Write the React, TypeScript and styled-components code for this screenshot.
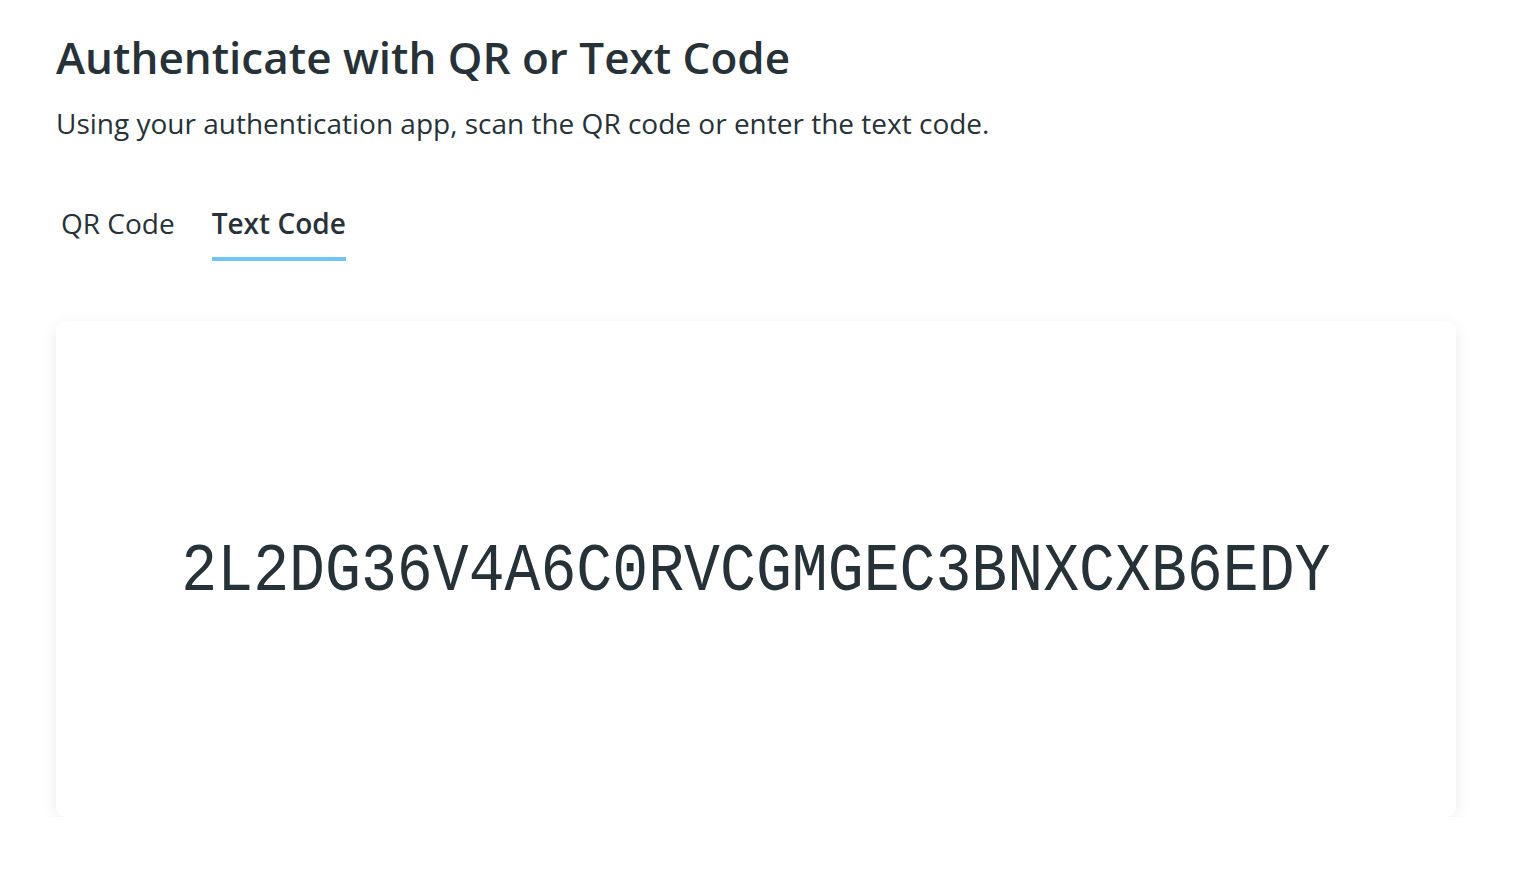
import styled, { createGlobalStyle } from 'styled-components'

const GlobalStyle = createGlobalStyle`
  body {
    margin: 0;
    background: #ffffff;
    font-family: "Open Sans", "Noto Sans", sans-serif;
    color: #263238;
  }
`

const Page = styled.div`
  padding: 28px 58px 0 56px;
`

const Title = styled.h1`
  margin: 0;
  font-size: 44px;
  font-weight: 600;
  line-height: 58px;
  color: #263238;
`

const Subtitle = styled.p`
  margin: 18px 0 0;
  font-size: 28px;
  line-height: 38px;
  color: #263238;
`

const Tabs = styled.div`
  display: flex;
  gap: 37px;
  margin-top: 62px;
  padding-left: 5px;
`

const Tab = styled.button<{ $active?: boolean }>`
  border: 0;
  background: none;
  padding: 0 0 15px;
  font-family: inherit;
  font-size: 28px;
  line-height: 38px;
  font-weight: ${(p) => (p.$active ? 600 : 400)};
  color: #263238;
  border-bottom: 4px solid ${(p) => (p.$active ? '#6ec4f4' : 'transparent')};
  cursor: pointer;
`

const Card = styled.div`
  margin-top: 60px;
  height: 496px;
  border-radius: 9px;
  background: #ffffff;
  box-shadow: 0 3px 16px rgba(0, 0, 0, 0.08);
  display: flex;
  align-items: center;
  justify-content: center;
`

const Code = styled.div`
  font-family: "Liberation Mono", "DejaVu Sans Mono", monospace;
  font-size: 68px;
  line-height: 80px;
  color: #263238;
  transform: scaleX(0.88);
  white-space: nowrap;
  padding-top: 6px;
`

const App = () => {
  return (
    <Page>
      <GlobalStyle />
      <Title>Authenticate with QR or Text Code</Title>
      <Subtitle>Using your authentication app, scan the QR code or enter the text code.</Subtitle>
      <Tabs>
        <Tab>QR Code</Tab>
        <Tab $active>Text Code</Tab>
      </Tabs>
      <Card>
        <Code>2L2DG36V4A6C0RVCGMGEC3BNXCXB6EDY</Code>
      </Card>
    </Page>
  )
}

export default App
